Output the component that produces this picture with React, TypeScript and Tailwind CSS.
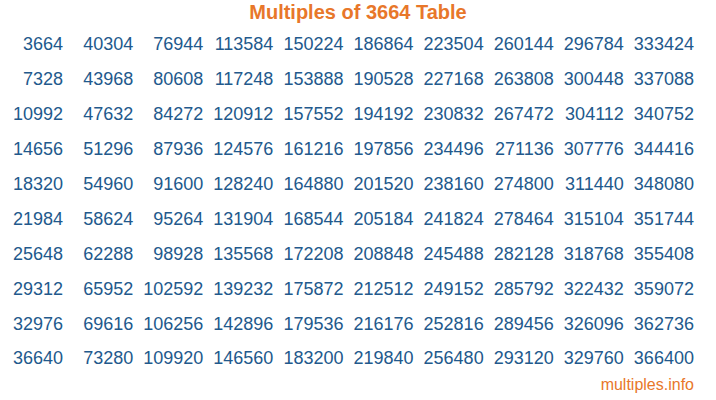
const BASE = 3664;

export default function App() {
  const rows = Array.from({ length: 10 }, (_, r) => r);
  const cols = Array.from({ length: 10 }, (_, c) => c);

  return (
    <div className="w-[716px] h-[400px] bg-white overflow-hidden font-['Liberation_Sans',Arial,sans-serif]">
      <h1 className="pt-[1px] h-[27.5px] text-center text-[20px] leading-[23px] font-bold text-[#e8772a]">
        Multiples of {BASE} Table
      </h1>
      <div className="ml-[1px] grid grid-cols-[repeat(10,70.1px)] auto-rows-[34.9px]">
        {rows.map((r) =>
          cols.map((c) => (
            <div
              key={`${r}-${c}`}
              className="flex items-center justify-end pr-[8px] text-[18px] text-[#22598c]"
            >
              {BASE * (c * 10 + r + 1)}
            </div>
          ))
        )}
      </div>
      <div className="w-[694px] text-right text-[16px] leading-[18px] text-[#e8772a]">
        multiples.info
      </div>
    </div>
  );
}
